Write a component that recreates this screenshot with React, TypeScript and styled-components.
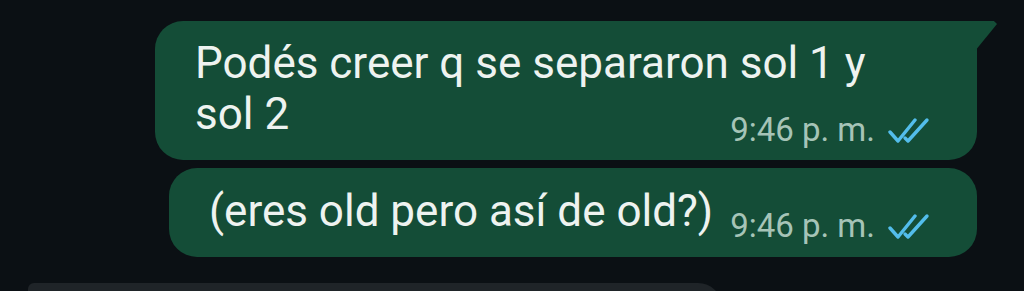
import React from 'react';
import styled, { createGlobalStyle, css } from 'styled-components';

const GlobalStyle = createGlobalStyle`
  html, body {
    margin: 0;
    padding: 0;
    background: #0b1014;
    overflow: hidden;
  }
  body {
    font-family: Roboto, 'Noto Sans', sans-serif;
  }
`;

const Chat = styled.div`
  height: 291px;
  display: flex;
  flex-direction: column;
  padding-top: 21px;
  box-sizing: border-box;
  overflow: hidden;
`;

const Bubble = styled.div<{ $stacked?: boolean; $tail?: boolean }>`
  position: relative;
  align-self: flex-end;
  margin-right: 47px;
  max-width: 822px;
  width: fit-content;
  box-sizing: border-box;
  background: #144d37;
  color: #eef3f0;
  border-radius: 28px;
  display: flex;
  ${({ $stacked }) =>
    $stacked
      ? css`
          flex-direction: column;
          padding: 17px 45px 15px 40px;
        `
      : css`
          flex-direction: row;
          align-items: flex-end;
          padding: 18px 45px 16px 40px;
        `}
  ${({ $tail }) =>
    $tail &&
    css`
      border-top-right-radius: 0;
      &::after {
        content: '';
        position: absolute;
        top: 0;
        right: -20px;
        width: 22px;
        height: 30px;
        background: #144d37;
        clip-path: polygon(0 0, 86% 0, 100% 10%, 0 100%);
      }
    `}

  & + & {
    margin-top: 8px;
  }
`;

const Text = styled.div<{ $stacked?: boolean }>`
  font-size: 44px;
  line-height: 51px;
  padding-right: 17px;
  ${({ $stacked }) => !$stacked && 'margin-bottom: 4px;'}
`;

const Meta = styled.div<{ $stacked?: boolean }>`
  display: flex;
  align-items: center;
  gap: 13px;
  flex-shrink: 0;
  font-size: 33px;
  line-height: 30px;
  color: #a6c4b7;
  white-space: nowrap;
  ${({ $stacked }) =>
    $stacked &&
    css`
      align-self: flex-end;
      margin-top: -25px;
    `}
`;

const Incoming = styled.div`
  margin-top: 26px;
  margin-left: 28px;
  width: 694px;
  height: 60px;
  flex-shrink: 0;
  background: #1f2428;
  border-radius: 6px 24px 24px 24px;
`;

const DoubleCheck = () => (
  <svg width="44" height="27" viewBox="0 0 44 27" fill="none">
    <path
      d="M2 15 L10 24 L27 3"
      stroke="#53bdeb"
      strokeWidth="3.4"
      strokeLinecap="round"
      strokeLinejoin="round"
    />
    <path
      d="M17 21 L20 24 L39 3"
      stroke="#53bdeb"
      strokeWidth="3.4"
      strokeLinecap="round"
      strokeLinejoin="round"
    />
  </svg>
);

interface MessageProps {
  text: string;
  time: string;
  stacked?: boolean;
  tail?: boolean;
}

const Message: React.FC<MessageProps> = ({ text, time, stacked, tail }) => (
  <Bubble $stacked={stacked} $tail={tail}>
    <Text $stacked={stacked}>{text}</Text>
    <Meta $stacked={stacked}>
      <span>{time}</span>
      <DoubleCheck />
    </Meta>
  </Bubble>
);

const App: React.FC = () => (
  <>
    <GlobalStyle />
    <Chat>
      <Message text="Podés creer q se separaron sol 1 y sol 2" time="9:46 p. m." stacked tail />
      <Message text="(eres old pero así de old?)" time="9:46 p. m." />
      <Incoming />
    </Chat>
  </>
);

export default App;
